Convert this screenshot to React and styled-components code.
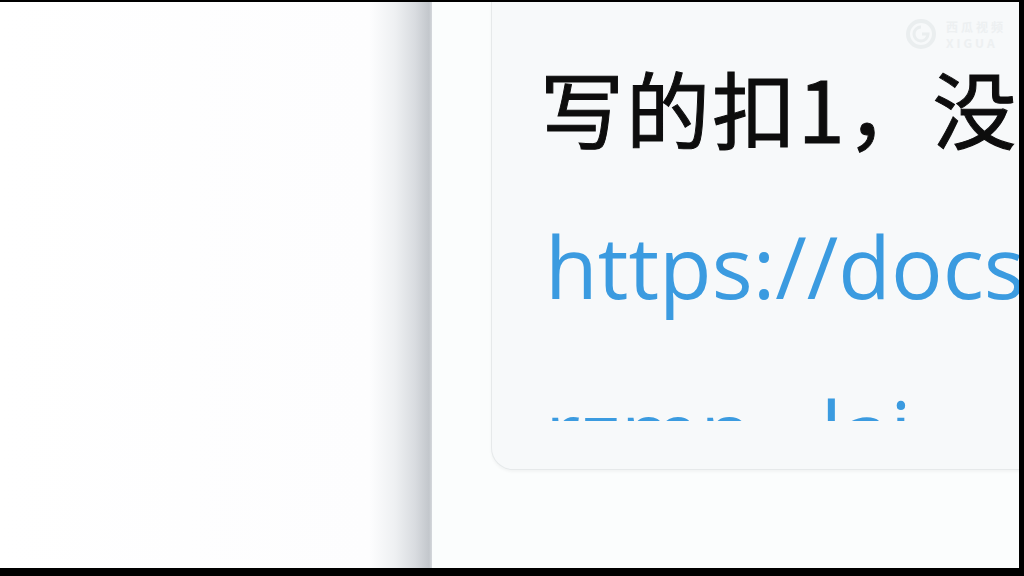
import React from "react";
import styled, { createGlobalStyle } from "styled-components";

const Global = createGlobalStyle`
  html, body { margin: 0; padding: 0; background: #000; overflow: hidden; }
  #root { width: 1024px; height: 576px; }
`;

const Frame = styled.div`
  width: 1024px;
  height: 576px;
  box-sizing: border-box;
  padding: 2px 5px 8px 0;
  background: #000;
`;

const Screen = styled.div`
  display: flex;
  width: 100%;
  height: 100%;
  overflow: hidden;
  background: #fff;
`;

const LeftPane = styled.div`
  flex: 0 0 432px;
  background: linear-gradient(
    to right,
    #ffffff 0,
    #fdfdfe 370px,
    #eef0f2 395px,
    #d9dce0 415px,
    #c3c7cc 429px,
    #d5d8dc 432px
  );
`;

const RightPane = styled.div`
  position: relative;
  flex: 1;
  min-width: 0;
  background: #fbfdfd;
  padding-left: 59px;
  overflow: hidden;
`;

const Card = styled.div`
  box-sizing: border-box;
  width: 900px;
  height: 468px;
  padding: 33px 0 0 53px;
  background: #f7f9fa;
  border: 1px solid #e6e9ea;
  border-top: none;
  border-radius: 0 0 22px 22px;
  box-shadow: 0 2px 3px rgba(0, 0, 0, 0.04);
`;

const Content = styled.div`
  height: 386px;
  overflow: hidden;
  font-family: "Open Sans", "Noto Sans CJK SC", sans-serif;
`;

const Message = styled.div`
  margin-left: -5px;
  font-size: 84px;
  line-height: 144px;
  font-weight: 400;
  letter-spacing: 2px;
  color: #0d0d0d;
  white-space: nowrap;
  font-family: "Noto Sans CJK SC", "Open Sans", sans-serif;
  -webkit-text-stroke: 1px #0d0d0d;
`;

const Link = styled.a`
  display: block;
  margin-top: 4px;
  font-size: 86px;
  line-height: 165px;
  color: #3b9be0;
  text-decoration: none;
  white-space: nowrap;
`;

const Watermark = styled.div`
  position: absolute;
  top: 16px;
  left: 473px;
  display: flex;
  align-items: center;
  gap: 9px;
  opacity: 0.5;
  color: #e4e8ea;
`;

const WatermarkText = styled.div`
  display: flex;
  flex-direction: column;
  gap: 1px;
  font-family: "Noto Sans CJK SC", sans-serif;
  font-size: 12px;
  line-height: 15px;
  font-weight: 700;
  letter-spacing: 3px;
`;

export default function App() {
  return (
    <>
      <Global />
      <Frame>
        <Screen>
          <LeftPane />
          <RightPane>
            <Card>
              <Content>
                <Message>写的扣1，没写的扣2</Message>
                <Link href="#">
                  https://docs.qq.com/doc/
                  <br />
                  rzmn...lai
                </Link>
              </Content>
            </Card>
            <Watermark>
              <svg width="32" height="32" viewBox="0 0 32 32">
                <circle cx="16" cy="16" r="13" fill="none" stroke="#dfe4e6" strokeWidth="4" />
                <path d="M16 9 a7 7 0 1 0 7 7 h-6" fill="none" stroke="#dfe4e6" strokeWidth="3" />
              </svg>
              <WatermarkText>
                <span>西瓜视频</span>
                <span>XIGUA</span>
              </WatermarkText>
            </Watermark>
          </RightPane>
        </Screen>
      </Frame>
    </>
  );
}
